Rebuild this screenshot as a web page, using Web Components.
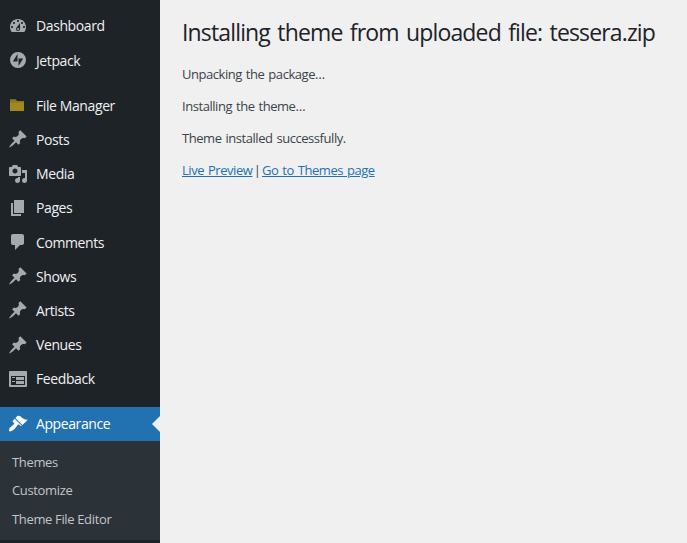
<!DOCTYPE html>
<html>
<head>
<meta charset="utf-8">
<title>Installing theme</title>
<style>
    html, body { margin: 0; height: 100%; overflow: hidden; background: #f0f0f1; }
    body { display: flex; align-items: stretch; font-family: "Open Sans", "Noto Sans", sans-serif; }
</style>
</head>
<body>
<admin-sidebar>
    <menu-item icon="dashboard">Dashboard</menu-item>
    <menu-item icon="jetpack">Jetpack</menu-item>
    <menu-separator></menu-separator>
    <menu-item icon="folder">File Manager</menu-item>
    <menu-item icon="post">Posts</menu-item>
    <menu-item icon="media">Media</menu-item>
    <menu-item icon="page">Pages</menu-item>
    <menu-item icon="comment">Comments</menu-item>
    <menu-item icon="post">Shows</menu-item>
    <menu-item icon="post">Artists</menu-item>
    <menu-item icon="post">Venues</menu-item>
    <menu-item icon="feedback">Feedback</menu-item>
    <menu-separator></menu-separator>
    <menu-item icon="appearance" current>Appearance</menu-item>
    <sub-menu>
        <sub-item>Themes</sub-item>
        <sub-item>Customize</sub-item>
        <sub-item>Theme File Editor</sub-item>
    </sub-menu>
</admin-sidebar>
<install-result>
    <span slot="title">Installing theme from uploaded file: tessera.zip</span>
    <p>Unpacking the package…</p>
    <p>Installing the theme…</p>
    <p>Theme installed successfully.</p>
    <p><a href="#">Live Preview</a><span class="sep"> | </span><a href="#">Go to Themes page</a></p>
</install-result>

<script>
// dashicons, 20x20 box
const ICONS = {
    dashboard: `<path d="M3.76 16h12.48c1.1-1.37 1.76-3.11 1.76-5 0-4.42-3.58-8-8-8s-8 3.58-8 8c0 1.89.66 3.63 1.76 5zM10 4c.55 0 1 .45 1 1s-.45 1-1 1-1-.45-1-1 .45-1 1-1zM6 6c.55 0 1 .45 1 1s-.45 1-1 1-1-.45-1-1 .45-1 1-1zm8 0c.55 0 1 .45 1 1s-.45 1-1 1-1-.45-1-1 .45-1 1-1zm-5.37 5.55L12 7v6c0 1.1-.9 2-2 2s-2-.9-2-2c0-.57.24-1.08.63-1.45zM4 10c.55 0 1 .45 1 1s-.45 1-1 1-1-.45-1-1 .45-1 1-1zm12 0c.55 0 1 .45 1 1s-.45 1-1 1-1-.45-1-1 .45-1 1-1zm-5 3c0-.55-.45-1-1-1s-1 .45-1 1 .45 1 1 1 1-.45 1-1z"/>`,
    jetpack: `<path fill-rule="evenodd" d="M10 2a8 8 0 1 0 0 16 8 8 0 0 0 0-16zM9.5 4v7.6H4.8zM10.5 16V8.4h4.7z"/>`,
    folder: `<path fill="#a08a1f" d="M2 4.5h5.5L9 6h7v10H2z"/><path fill="#8a7719" d="M2 4.5h5.5L9 6h7v1.5H2z"/>`,
    post: `<path d="M10.44 3.02l1.82-1.82 6.36 6.35-1.83 1.82c-1.05-.68-2.48-.57-3.41.36l-.75.75c-.92.93-1.04 2.35-.35 3.41l-1.83 1.82-2.41-2.41-2.8 2.79c-.42.42-3.38 2.71-3.8 2.29s1.86-3.39 2.28-3.81l2.79-2.79L4.1 9.36l1.83-1.82c1.05.69 2.48.57 3.4-.36l.75-.75c.93-.92 1.05-2.35.36-3.41z"/>`,
    media: `<path d="M13 11V4c0-.55-.45-1-1-1h-1.67L9 1H5L3.67 3H2c-.55 0-1 .45-1 1v7c0 .55.45 1 1 1h10c.55 0 1-.45 1-1zM7 4.5c1.38 0 2.5 1.12 2.5 2.5S8.38 9.5 7 9.5 4.5 8.38 4.5 7 5.62 4.5 7 4.5zM14 6h5v10.5c0 1.38-1.12 2.5-2.5 2.5S14 17.88 14 16.5s1.12-2.5 2.5-2.5c.17 0 .34.02.5.05V9h-3V6zm-4 8.05V13h2v3.5c0 1.38-1.12 2.5-2.5 2.5S7 17.88 7 16.5 8.12 14 9.5 14c.17 0 .34.02.5.05z"/>`,
    page: `<path d="M6 15V2h10v13H6zm-1 1h8v2H3V5h2v11z"/>`,
    comment: `<path d="M5 2h9c1.1 0 2 .9 2 2v7c0 1.1-.9 2-2 2h-2l-5 5v-5H5c-1.1 0-2-.9-2-2V4c0-1.1.9-2 2-2z"/>`,
    feedback: `<path d="M2 2h16c.55 0 1 .45 1 1v14c0 .55-.45 1-1 1H2c-.55 0-1-.45-1-1V3c0-.55.45-1 1-1zm15 14V7H3v9h14zM4 8v1h3V8H4zm4 0v3h8V8H8zm-4 4v1h3v-1H4zm4 0v3h8v-3H8z"/>`,
    appearance: `<path d="M14.48 11.06L7.41 3.99l1.77-1.77c.78-.78 2.6-.5 3.5.3 1.1.95 1.5 1.4 2.9 2.2 1.2.65 2.6 1.2 4.2 1.04zM13.77 11.77L6.7 4.7 4.93 6.47c-.39.39-.39 1.02 0 1.41l1.06 1.06c.39.39.39 1.03 0 1.42-.6.6-1.43 1.11-2.21 1.69-.35.26-.7.53-1.01.84C1.43 13.23.6 16.4 1.4 17.3c.8.7 3.9-.8 5.9-3.3.4-.4.66-.75.9-1.1.58-.77 1.09-1.6 1.69-2.19.39-.39 1.02-.39 1.41 0l1.06 1.06c.39.39 1.02.39 1.41 0z"/>`
};

class AdminSidebar extends HTMLElement {
    constructor() {
        super();
        this.attachShadow({mode: "open"}).innerHTML = `
            <style>
                :host { display: block; flex: 0 0 160px; width: 160px; box-sizing: border-box; padding-top: 8.8px; background: #1d2327; }
            </style>
            <slot></slot>
        `;
    }
}

class MenuItem extends HTMLElement {
    constructor() {
        super();
        this.attachShadow({mode: "open"}).innerHTML = `
            <style>
                :host { display: flex; align-items: center; position: relative; height: 34.2px; color: #f0f0f1; font-size: 14px; letter-spacing: -0.4px; }
                :host([current]) { background: #2271b1; color: #fff; }
                :host([current]) .icon { fill: #fff; }
                :host([current])::after { content: ""; position: absolute; right: 0; top: 50%; margin-top: -8px; border: 8px solid transparent; border-right-color: #f0f0f1; border-left-width: 0; }
                .icon { flex: none; width: 20px; height: 20px; margin: 0 8px; fill: #a7aaad; }
            </style>
            <svg class="icon" viewBox="0 0 20 20">${ICONS[this.getAttribute("icon")] || ""}</svg>
            <span><slot></slot></span>
        `;
    }
}

class MenuSeparator extends HTMLElement {
    constructor() {
        super();
        this.attachShadow({mode: "open"}).innerHTML = `<style>:host { display: block; height: 11px; }</style>`;
    }
}

class SubMenu extends HTMLElement {
    constructor() {
        super();
        this.attachShadow({mode: "open"}).innerHTML = `
            <style>:host { display: block; padding: 6.8px 0 7.2px; background: #2c3338; }</style>
            <slot></slot>
        `;
    }
}

class SubItem extends HTMLElement {
    constructor() {
        super();
        this.attachShadow({mode: "open"}).innerHTML = `
            <style>:host { display: flex; align-items: center; height: 28.4px; padding-left: 12px; color: #c3c4c7; font-size: 13px; letter-spacing: -0.35px; }</style>
            <slot></slot>
        `;
    }
}

class InstallResult extends HTMLElement {
    constructor() {
        super();
        this.attachShadow({mode: "open"}).innerHTML = `
            <style>
                :host { display: block; flex: 1; min-width: 0; padding: 0 20px 0 22px; color: #3c434a; font-size: 13px; letter-spacing: -0.45px; word-spacing: 1px; }
                h1 { margin: 0; padding: 17px 0 18px; font-size: 23px; font-weight: 400; line-height: 30px; color: #1d2327; white-space: nowrap; letter-spacing: -0.85px; word-spacing: 2.2px; }
            </style>
            <h1><slot name="title"></slot></h1>
            <slot></slot>
        `;
    }
}

customElements.define("admin-sidebar", AdminSidebar);
customElements.define("menu-item", MenuItem);
customElements.define("menu-separator", MenuSeparator);
customElements.define("sub-menu", SubMenu);
customElements.define("sub-item", SubItem);
customElements.define("install-result", InstallResult);
</script>
<style>
    install-result p { margin: 0 0 13.8px; line-height: 18.2px; }
    install-result a { color: #2271b1; }
    install-result .sep { word-spacing: -1.5px; }
</style>
</body>
</html>
